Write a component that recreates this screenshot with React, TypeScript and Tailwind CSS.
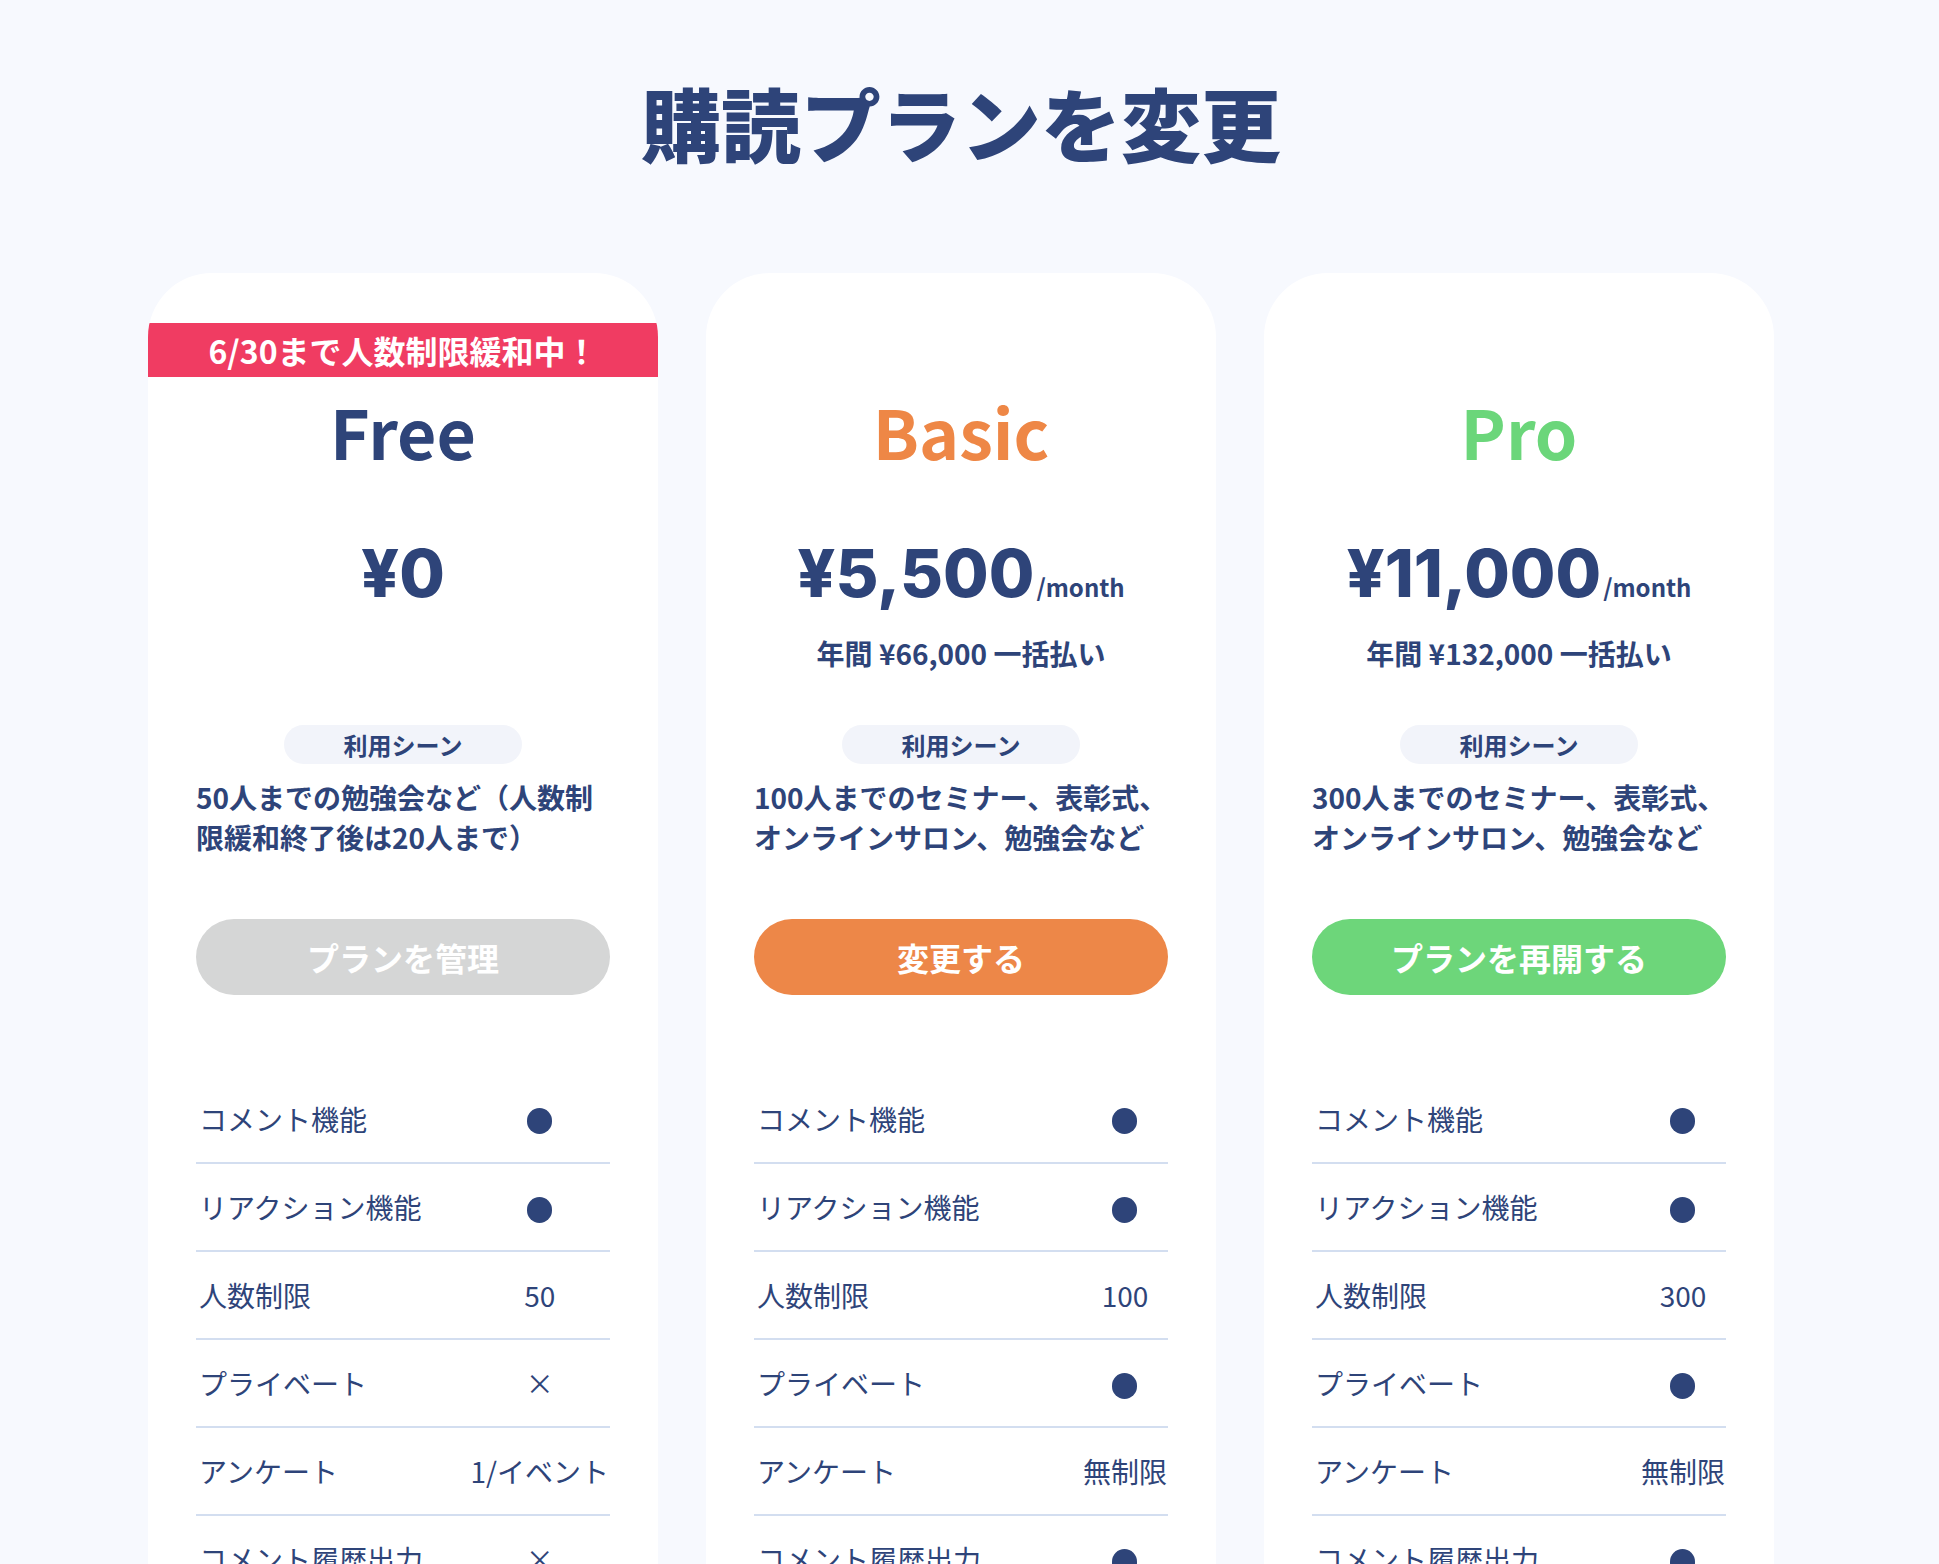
import React from "react";

type Plan = {
  name: string;
  nameColor: string;
  price: string;
  monthly: boolean;
  annual?: string;
  banner?: string;
  scene: string[];
  button: string;
  btnBg: string;
  values: string[];
};

const labels = [
  "コメント機能",
  "リアクション機能",
  "人数制限",
  "プライベート",
  "アンケート",
  "コメント履歴出力",
  "参加者リスト出力",
];

const plans: Plan[] = [
  {
    name: "Free",
    nameColor: "text-[#2e4479]",
    price: "¥0",
    monthly: false,
    banner: "6/30まで人数制限緩和中！",
    scene: ["50人までの勉強会など（人数制", "限緩和終了後は20人まで）"],
    button: "プランを管理",
    btnBg: "bg-[#d5d6d6]",
    values: ["dot", "dot", "50", "×", "1/イベント", "×", "×"],
  },
  {
    name: "Basic",
    nameColor: "text-[#ee8746]",
    price: "¥5,500",
    monthly: true,
    annual: "年間 ¥66,000 一括払い",
    scene: ["100人までのセミナー、表彰式、", "オンラインサロン、勉強会など"],
    button: "変更する",
    btnBg: "bg-[#ed8748]",
    values: ["dot", "dot", "100", "dot", "無制限", "dot", "dot"],
  },
  {
    name: "Pro",
    nameColor: "text-[#6bd67a]",
    price: "¥11,000",
    monthly: true,
    annual: "年間 ¥132,000 一括払い",
    scene: ["300人までのセミナー、表彰式、", "オンラインサロン、勉強会など"],
    button: "プランを再開する",
    btnBg: "bg-[#6dd67a]",
    values: ["dot", "dot", "300", "dot", "無制限", "dot", "dot"],
  },
];

function Card({ plan }: { plan: Plan }) {
  return (
    <div className="w-[510px] shrink-0 bg-white rounded-t-[64px] overflow-hidden pt-[50px] pb-[40px]">
      <div className="h-[54px]">
        {plan.banner && (
          <div className="h-full bg-[#f03c62] text-white text-[32px] font-bold leading-none flex items-center justify-center">
            {plan.banner}
          </div>
        )}
      </div>
      <div className="px-[48px] text-[#2e4479]">
        <div className={`mt-[20px] text-center text-[68px] font-bold leading-none ${plan.nameColor}`}>
          {plan.name}
        </div>
        <div className="mt-[75px] flex justify-center items-baseline">
          <span className="font-['Inter',sans-serif] font-extrabold text-[66px] leading-none">
            {plan.price}
          </span>
          {plan.monthly && (
            <span className="ml-[2px] text-[24px] font-bold leading-none">/month</span>
          )}
        </div>
        <div className="mt-[33px] h-[28px] text-center text-[28px] font-bold leading-none whitespace-nowrap">
          {plan.annual ?? ""}
        </div>
        <div className="mt-[58px] flex justify-center">
          <div className="h-[39px] px-[60px] rounded-full bg-[#f2f4fa] text-[24px] font-bold leading-none flex items-center">
            利用シーン
          </div>
        </div>
        <div className="mt-[13px] text-[28px] leading-[40px] font-bold">
          {plan.scene.map((l) => (
            <div key={l} className="whitespace-nowrap">
              {l}
            </div>
          ))}
        </div>
        <div
          className={`mt-[62px] h-[76px] rounded-full ${plan.btnBg} text-white text-[32px] font-bold leading-none flex items-center justify-center`}
        >
          {plan.button}
        </div>
        <table className="mt-[80px] w-full border-collapse">
          <tbody>
            {labels.map((label, i) => (
              <tr key={label} className="border-b-2 border-[#d3def0]">
                <td className="h-[88px] align-middle text-left text-[28px] leading-none pl-[3px]">
                  {label}
                </td>
                <td className="h-[88px] w-px whitespace-nowrap align-middle text-center text-[28px] leading-none pr-[1px]">
                  {plan.values[i] === "dot" ? (
                    <span className="inline-block w-[25px] h-[26px] rounded-full bg-[#2e4479] align-middle" />
                  ) : (
                    plan.values[i]
                  )}
                </td>
              </tr>
            ))}
          </tbody>
        </table>
      </div>
    </div>
  );
}

export default function App() {
  return (
    <div
      className="w-full h-[1564px] overflow-hidden bg-[#f7f9fe] text-[#2e4479]"
      style={{ fontFamily: '"Noto Sans CJK JP", "Noto Sans", sans-serif' }}
    >
      <div className="ml-[148px] w-[1626px]">
        <h1 className="pt-[81px] text-center text-[80px] leading-none font-black">
          購読プランを変更
        </h1>
        <div className="mt-[112px] flex gap-[48px]">
          {plans.map((p) => (
            <Card key={p.name} plan={p} />
          ))}
        </div>
      </div>
    </div>
  );
}
